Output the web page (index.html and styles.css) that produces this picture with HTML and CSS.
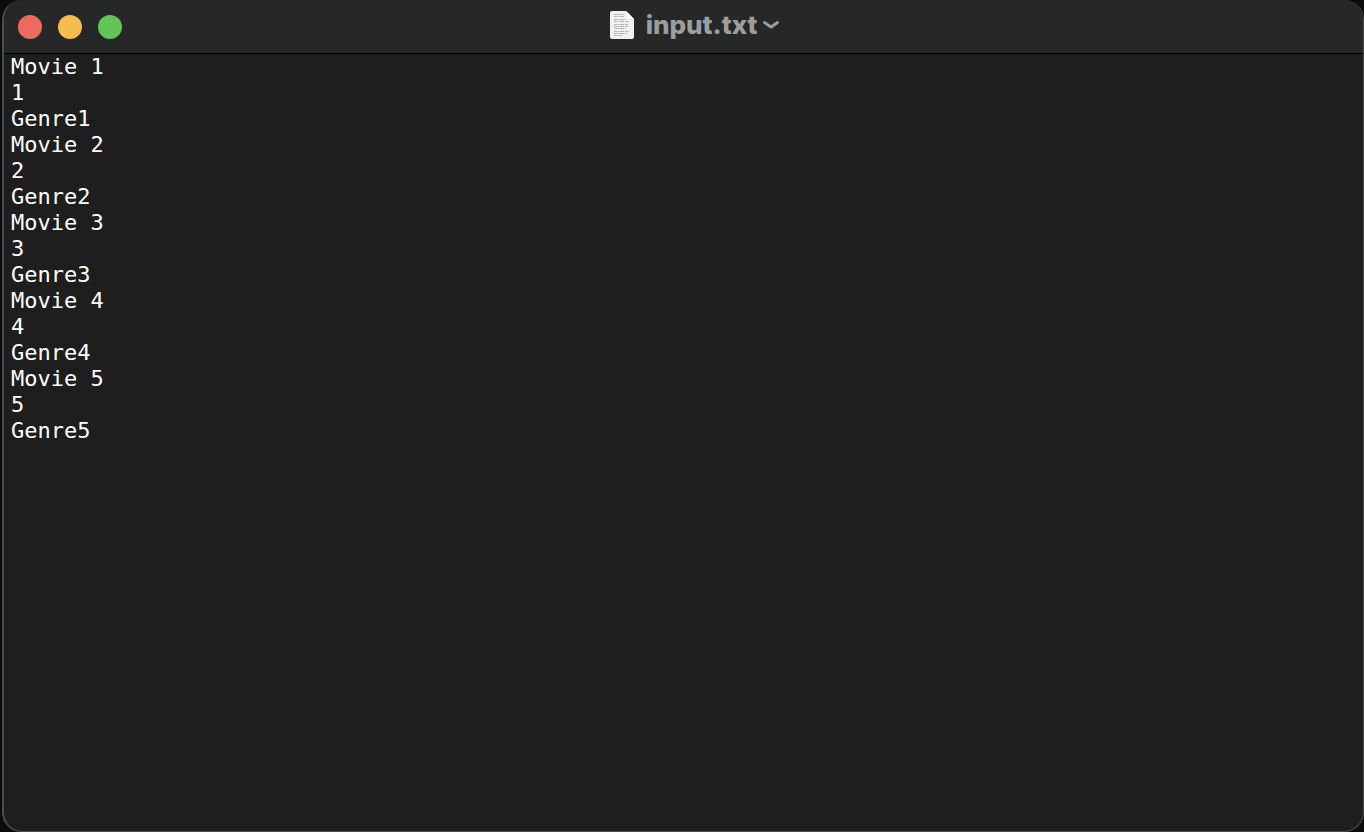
FILE: index.html
```
<!DOCTYPE html>
<html lang="en">
<head>
<meta charset="UTF-8">
<meta name="viewport" content="width=device-width, initial-scale=1.0">
<title>input.txt</title>
<link rel="stylesheet" href="styles.css">
</head>
<body>

<div class="window">
  <header class="titlebar">
    <div class="controls">
      <button class="control close" aria-label="Close"></button>
      <button class="control minimize" aria-label="Minimize"></button>
      <button class="control zoom" aria-label="Zoom"></button>
    </div>
    <button class="title">
      <svg class="file-icon" width="24" height="28" viewBox="0 0 24 28" aria-hidden="true">
        <path d="M2 0H16L24 8V26Q24 28 22 28H2Q0 28 0 26V2Q0 0 2 0Z" fill="#f1f1f1"/>
        <path d="M4 3.5H15M4 5.5H14M4 8.5H16M4 10.5H19M4 13.5H18M4 15.5H19M4 17.5H16M4 20.5H19M4 22.5H17M4 24.5H12" fill="none" stroke="#b4b4b4" stroke-width="1" stroke-dasharray="3 .6 2 .5 4 .7"/>
        <path d="M16 0V6Q16 8 18 8H24Z" fill="#fff" stroke="#cfcfcf" stroke-width=".5"/>
      </svg>
      <span class="filename">input.txt</span>
      <svg class="chevron" width="16" height="10" viewBox="0 0 16 10" aria-hidden="true">
        <path d="M1.5 2.5L8 7L14.5 2.5" fill="none" stroke="#9c9e9d" stroke-width="2.8" stroke-linecap="round" stroke-linejoin="round"/>
      </svg>
    </button>
  </header>
  <textarea class="editor" aria-label="Document text" spellcheck="false">
Movie 1
1
Genre1
Movie 2
2
Genre2
Movie 3
3
Genre3
Movie 4
4
Genre4
Movie 5
5
Genre5</textarea>
</div>

</body>
</html>
```

FILE: styles.css
```
* {
  box-sizing: border-box;
}
body {
  margin: 0;
  padding-left: 2px;
  background-color: #0b0c0d;
  font-family: Inter, "Liberation Sans", sans-serif;
}
.window {
  display: flex;
  flex-direction: column;
  height: 100vh;
  overflow: hidden;
  background-color: #1e1e1e;
  border: 1px solid #4b4d4c;
  border-left-width: 2px;
  border-top: none;
  border-radius: 20px;
}
.titlebar {
  display: grid;
  grid-template-columns: 1fr auto 1fr;
  align-items: center;
  height: 54px;
  padding: 0 14px;
  background-color: #252827;
  border-bottom: 1px solid #000;
}
.controls {
  display: flex;
  gap: 16px;
}
.control {
  width: 24px;
  height: 24px;
  padding: 0;
  border: none;
  border-radius: 50%;
}
.close {
  background-color: #ed6a5e;
}
.minimize {
  background-color: #f5bd4f;
}
.zoom {
  background-color: #61c454;
}
.title {
  display: flex;
  align-items: center;
  padding: 0 0 4px 22px;
  border: none;
  background: none;
  color: #9c9e9d;
  font-family: inherit;
  font-size: 26px;
  font-weight: 800;
  line-height: 32px;
}
.filename {
  margin: 0 6px 0 12px;
}
.editor {
  flex: 1;
  padding: 0 7px;
  border: none;
  outline: none;
  resize: none;
  background: none;
  color: #fff;
  font-family: "DejaVu Sans Mono", "Liberation Mono", monospace;
  font-size: 22px;
  line-height: 26px;
}
```
